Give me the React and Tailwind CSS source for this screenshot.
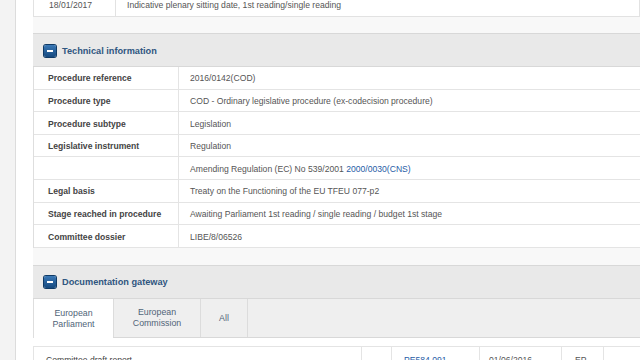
import React from 'react';

const rows = [
    { label: 'Procedure reference', value: '2016/0142(COD)' },
    { label: 'Procedure type', value: 'COD - Ordinary legislative procedure (ex-codecision procedure)' },
    { label: 'Procedure subtype', value: 'Legislation' },
    { label: 'Legislative instrument', value: 'Regulation' },
    { label: '', value: 'Amending Regulation (EC) No 539/2001 ', link: '2000/0030(CNS)' },
    { label: 'Legal basis', value: 'Treaty on the Functioning of the EU TFEU 077-p2' },
    { label: 'Stage reached in procedure', value: 'Awaiting Parliament 1st reading / single reading / budget 1st stage' },
    { label: 'Committee dossier', value: 'LIBE/8/06526' },
];

function MinusIcon() {
    return (
        <span className="flex h-[12px] w-[12px] items-center justify-center rounded-[2px] bg-gradient-to-b from-[#3a78b6] to-[#15497f] shadow-[0_0_0_1px_#0f3a66]">
            <span className="block h-[2px] w-[6px] bg-white" />
        </span>
    );
}

function SectionHeader({ title }) {
    return (
        <div className="flex h-[34px] shrink-0 items-center gap-[6px] border-y border-[#d8d8d8] bg-[#e9e9e9] pl-[11px] pt-[1px]">
            <MinusIcon />
            <span className="pt-[2px] text-[9.2px] font-bold text-[#2f5680]">{title}</span>
        </div>
    );
}

export default function App() {
    return (
        <div className="flex h-[360px] w-[640px] overflow-hidden bg-white text-[8.6px] text-[#555]" style={{ fontFamily: '"Liberation Sans", Arial, sans-serif' }}>
            <div className="w-[16px] shrink-0 border-r border-[#dcdcdc] bg-[#f3f3f3]" />
            <div className="flex min-w-0 flex-1 flex-col pl-[17px] -mt-[7px]">
                {/* forecast row */}
                <div className="flex h-[24px] shrink-0 items-center border-x border-b border-[#e2e2e2] bg-white">
                    <div className="flex h-full w-[82px] shrink-0 items-center justify-center border-r border-[#e2e2e2] pr-[8px] pt-[1px]">18/01/2017</div>
                    <div className="pl-[11px] pt-[1px]">Indicative plenary sitting date, 1st reading/single reading</div>
                </div>
                <div className="h-[16px] shrink-0 bg-[#f8f8f8]" />

                {/* technical information */}
                <SectionHeader title="Technical information" />
                <div className="shrink-0 border-l border-[#dedede] bg-white">
                    {rows.map((row, i) => (
                        <div key={i} className="flex h-[22.6px] items-center border-b border-[#e4e4e4]">
                            <div className="flex h-full w-[145px] shrink-0 items-center border-r border-[#e4e4e4] pl-[14px] pt-[2px] font-bold text-[#444]">
                                {row.label}
                            </div>
                            <div className="pl-[11px] pt-[2px]">
                                {row.value}
                                {row.link && <span className="text-[#1f5ca6]">{row.link}</span>}
                            </div>
                        </div>
                    ))}
                </div>
                <div className="h-[17px] shrink-0 bg-[#f8f8f8]" />

                {/* documentation gateway */}
                <SectionHeader title="Documentation gateway" />
                <div className="flex h-[39px] shrink-0 border-b border-[#d8d8d8] bg-[#efefef] text-[8.8px] leading-[11px] text-[#4f6478]">
                    <div className="-mb-px flex w-[80px] shrink-0 items-center justify-center border-l border-[#dedede] bg-white pt-[1px] text-center">
                        European<br />Parliament
                    </div>
                    <div className="flex w-[88px] shrink-0 items-center justify-center border-x border-[#dcdcdc] pt-[1px] text-center">
                        European<br />Commission
                    </div>
                    <div className="flex w-[47px] shrink-0 items-center justify-center border-r border-[#dcdcdc] pt-[1px]">All</div>
                </div>
                <div className="h-[8px] shrink-0 bg-white" />
                <div className="flex h-[24px] shrink-0 border-y border-l border-[#e4e4e4] leading-[22px] text-[#555]">
                    <div className="w-[327px] shrink-0 pl-[12px] pt-[2px] text-[#444]">Committee draft report</div>
                    <div className="w-[30px] shrink-0 border-l border-[#e4e4e4]" />
                    <div className="w-[88px] shrink-0 border-l border-[#e4e4e4] pl-[12px] pt-[2px] text-[#1f5ca6]">PE584.091</div>
                    <div className="w-[82px] shrink-0 border-l border-[#e4e4e4] pl-[9px] pt-[2px]">01/06/2016</div>
                    <div className="w-[42px] shrink-0 border-l border-[#e4e4e4] pl-[13px] pt-[2px]">EP</div>
                    <div className="flex-1 border-l border-[#e4e4e4]" />
                </div>
            </div>
        </div>
    );
}
